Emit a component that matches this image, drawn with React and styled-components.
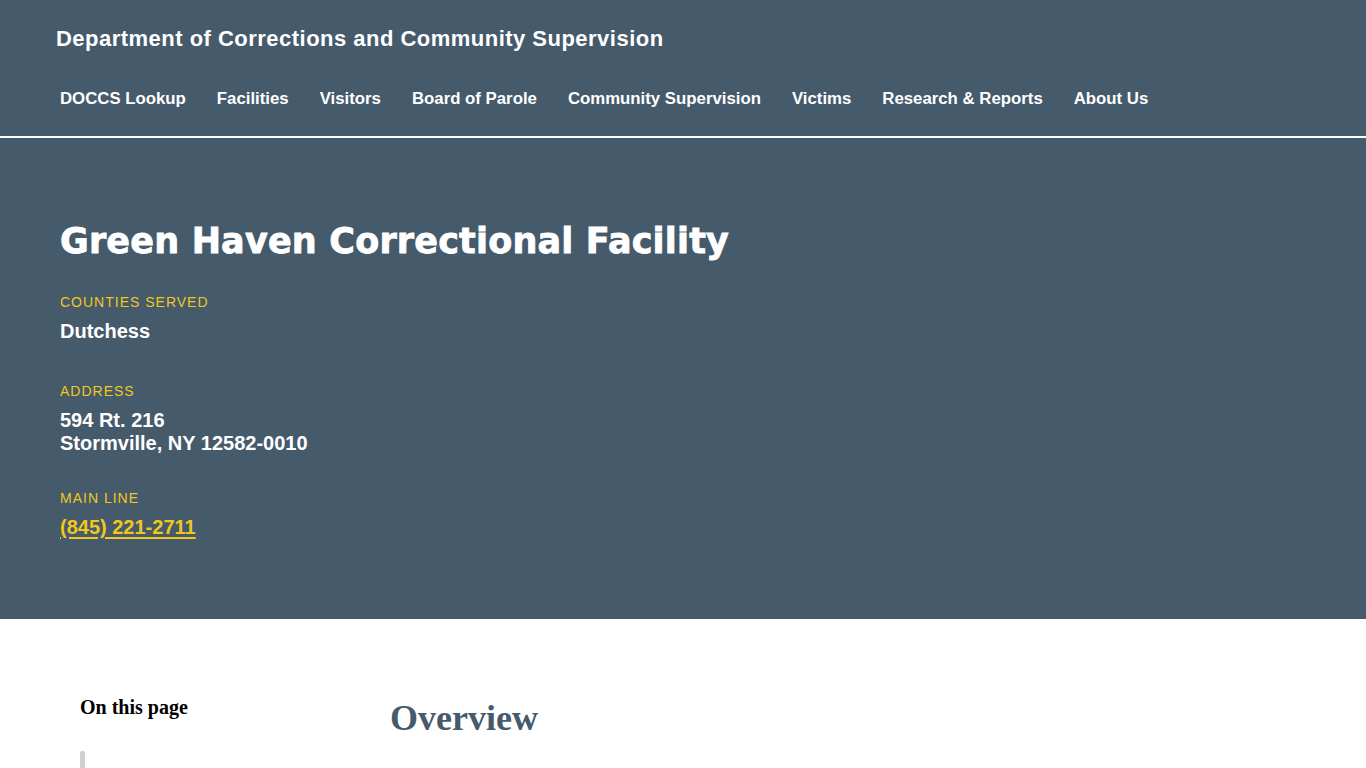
import React from "react";
import styled, { createGlobalStyle } from "styled-components";

const Global = createGlobalStyle`
  html, body { margin: 0; padding: 0; background: #fff; }
  body { font-family: "Liberation Sans", Arial, sans-serif; }
  * { box-sizing: border-box; }
`;

const NAVY = "#455a6b";
const GOLD = "#f2c71c";

const Header = styled.header`
  background: ${NAVY};
  border-bottom: 2px solid #fff;
`;

const TopBar = styled.div`
  height: 77px;
  display: flex;
  align-items: center;
  padding: 0 56px;
`;

const SiteTitle = styled.a`
  color: #fff;
  font-size: 22px;
  font-weight: 700;
  letter-spacing: 0.48px;
  text-decoration: none;
`;

const Nav = styled.nav`
  padding: 12px 60px 27px;
`;

const NavList = styled.ul`
  list-style: none;
  margin: 0;
  padding: 0;
  display: flex;
  gap: 31px;
`;

const NavItem = styled.li`
  color: #fff;
  font-size: 16.8px;
  font-weight: 700;
  line-height: 20px;
  white-space: nowrap;
`;

const Hero = styled.section`
  background: ${NAVY};
  padding: 79px 60px 80px;
`;

const FacilityName = styled.h1`
  margin: 0 0 27px;
  color: #fff;
  font-family: "DejaVu Sans", "Liberation Sans", sans-serif;
  font-size: 35px;
  line-height: 48px;
  font-weight: 700;
  letter-spacing: 0.18px;
  -webkit-text-stroke: 0.8px #fff;
`;

const Group = styled.div`
  margin-top: ${(p) => p.$gap || 0}px;
  display: flex;
  flex-direction: column;
  gap: 8px;
`;

const Label = styled.div`
  color: ${GOLD};
  font-size: 14px;
  line-height: 20px;
  letter-spacing: 1px;
  text-transform: uppercase;
`;

const Value = styled.div`
  color: #fff;
  font-size: 20px;
  line-height: 23px;
  font-weight: 700;
`;

const Phone = styled.a`
  color: ${GOLD};
  font-size: 20px;
  line-height: 23px;
  font-weight: 700;
  text-decoration: underline;
  text-underline-offset: 3px;
  align-self: flex-start;
`;

const Body = styled.main`
  display: grid;
  grid-template-columns: 310px 1fr;
  padding: 77px 0 0 80px;
`;

const Sidebar = styled.aside`
  display: flex;
  flex-direction: column;
`;

const SideTitle = styled.h2`
  margin: 0;
  font-family: "Liberation Serif", "Times New Roman", serif;
  font-size: 20px;
  line-height: 22px;
  font-weight: 700;
  color: #000;
`;

const SideRail = styled.div`
  margin-top: 33px;
  width: 5px;
  height: 40px;
  background: #cfcfcf;
  border-radius: 2px 2px 0 0;
`;

const Content = styled.section``;

const SectionTitle = styled.h2`
  margin: 0;
  font-family: "Liberation Serif", "Times New Roman", serif;
  font-size: 36px;
  line-height: 44px;
  font-weight: 700;
  color: ${NAVY};
`;

const navItems = [
  "DOCCS Lookup",
  "Facilities",
  "Visitors",
  "Board of Parole",
  "Community Supervision",
  "Victims",
  "Research & Reports",
  "About Us",
];

export default function App() {
  return (
    <>
      <Global />
      <Header>
        <TopBar>
          <SiteTitle href="#">Department of Corrections and Community Supervision</SiteTitle>
        </TopBar>
        <Nav>
          <NavList>
            {navItems.map((n) => (
              <NavItem key={n}>{n}</NavItem>
            ))}
          </NavList>
        </Nav>
      </Header>
      <Hero>
        <FacilityName>Green Haven Correctional Facility</FacilityName>
        <Group>
          <Label>Counties Served</Label>
          <Value>Dutchess</Value>
        </Group>
        <Group $gap={38}>
          <Label>Address</Label>
          <Value>
            594 Rt. 216
            <br />
            Stormville, NY 12582-0010
          </Value>
        </Group>
        <Group $gap={33}>
          <Label>Main Line</Label>
          <Phone href="#">(845) 221-2711</Phone>
        </Group>
      </Hero>
      <Body>
        <Sidebar>
          <SideTitle>On this page</SideTitle>
          <SideRail />
        </Sidebar>
        <Content>
          <SectionTitle>Overview</SectionTitle>
        </Content>
      </Body>
    </>
  );
}
